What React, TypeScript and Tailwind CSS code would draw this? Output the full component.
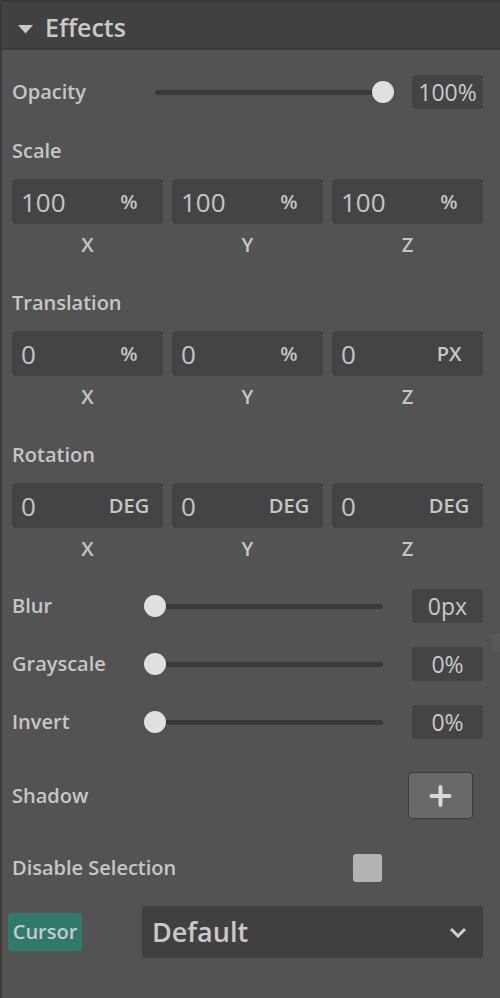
import React from 'react';

const font = { fontFamily: '"Open Sans", "Noto Sans", sans-serif' };

function Slider({ value }: { value: number }) {
  // thumb is centred on the track ends
  return (
    <div className="relative h-[22px] w-[228px]">
      <div className="absolute left-0 right-0 top-[9px] h-[5px] rounded-full bg-[#3a3a3a]" />
      <div
        className="absolute top-0 h-[22px] w-[22px] rounded-full bg-[#e0e0e0]"
        style={{ left: `calc(${value}% - 11px)` }}
      />
    </div>
  );
}

function ValueBox({ text }: { text: string }) {
  return (
    <div className="ml-auto flex h-[34px] w-[71px] items-center justify-center rounded-[3px] bg-[#444444] text-[23px] font-medium leading-none text-[#c9c9c9]">
      {text}
    </div>
  );
}

function SliderRow({ label, value, text, className = '' }: { label: string; value: number; text: string; className?: string }) {
  return (
    <div className={`flex items-center ${className}`}>
      <div className="w-[143px] text-[20px] font-semibold text-[#c6c6c6]">{label}</div>
      <Slider value={value} />
      <ValueBox text={text} />
    </div>
  );
}

function NumField({ value, unit }: { value: string; unit: string }) {
  return (
    <div className="flex h-[45px] items-center rounded-[3px] bg-[#444444] pl-[9px] pr-[4px]">
      <span className="flex-1 text-[26px] leading-none text-[#c4c4c4]">{value}</span>
      <span className="w-[60px] text-center text-[20px] font-semibold leading-none text-[#c6c6c6]">{unit}</span>
    </div>
  );
}

function VectorGroup({ label, values, units, className = '' }: { label: string; values: string[]; units: string[]; className?: string }) {
  return (
    <div className={className}>
      <div className="flex h-[28px] items-center text-[20px] font-semibold text-[#c6c6c6]">{label}</div>
      <div className="mt-[14px] grid grid-cols-3 gap-[9px]">
        {values.map((v, i) => (
          <NumField key={i} value={v} unit={units[i]} />
        ))}
      </div>
      <div className="mt-[7px] grid grid-cols-3 gap-[9px]">
        {['X', 'Y', 'Z'].map((a) => (
          <div key={a} className="flex h-[28px] items-center justify-center text-[20px] font-semibold text-[#c6c6c6]">
            {a}
          </div>
        ))}
      </div>
    </div>
  );
}

export default function App() {
  return (
    <div className="relative h-[998px] w-[500px] overflow-hidden border-l-2 border-t-2 border-[#3a3a3a] bg-[#535353]" style={font}>
      <div className="flex h-[48px] items-center border-b-2 border-[#3b3b3b] bg-[#414141] pl-[16px] pt-[6px]">
        <svg width="15" height="9" viewBox="0 0 15 9" className="mt-[2px]">
          <path d="M0 0 L15 0 L7.5 8.5 Z" fill="#c9c9c9" />
        </svg>
        <span className="ml-[12px] text-[25px] font-semibold text-[#c9c9c9]">Effects</span>
      </div>

      <div className="pl-[10px] pr-[17px]">
        <SliderRow label="Opacity" value={100} text="100%" className="mt-[25px]" />

        <VectorGroup className="mt-[28px]" label="Scale" values={['100', '100', '100']} units={['%', '%', '%']} />
        <VectorGroup className="mt-[30px]" label="Translation" values={['0', '0', '0']} units={['%', '%', 'PX']} />
        <VectorGroup className="mt-[30px]" label="Rotation" values={['0', '0', '0']} units={['DEG', 'DEG', 'DEG']} />

        <SliderRow label="Blur" value={0} text="0px" className="mt-[26px]" />
        <SliderRow label="Grayscale" value={0} text="0%" className="mt-[24px]" />
        <SliderRow label="Invert" value={0} text="0%" className="mt-[24px]" />

        <div className="mt-[33px] flex h-[47px] items-center">
          <div className="text-[20px] font-semibold text-[#c6c6c6]">Shadow</div>
          <button className="ml-auto mr-[10px] flex h-[47px] w-[65px] items-center justify-center rounded-[4px] border border-[#3c3c3c] bg-[#696969]">
            <svg width="23" height="22" viewBox="0 0 23 22">
              <path d="M11.5 2 V20 M2.5 11 H20.5" stroke="#d8d8d8" strokeWidth="4" strokeLinecap="round" />
            </svg>
          </button>
        </div>

        <div className="mt-[35px] flex h-[28px] items-center">
          <div className="w-[341px] text-[20px] font-semibold text-[#c6c6c6]">Disable Selection</div>
          <div className="h-[28px] w-[29px] rounded-[3px] bg-[#b3b3b3]" />
        </div>

        <div className="mt-[24px] flex h-[52px] items-center">
          <div className="-ml-[4px] flex h-[38px] w-[74px] items-center justify-center rounded-[3px] bg-[#2f7b6b] text-[20px] font-semibold text-[#c9c9c9]">
            Cursor
          </div>
          <div className="ml-auto flex h-[52px] w-[341px] items-center rounded-[3px] bg-[#404040] pl-[10px] pr-[16px]">
            <span className="flex-1 text-[27px] font-semibold text-[#c9c9c9]">Default</span>
            <svg width="18" height="11" viewBox="0 0 18 11">
              <path d="M2 2 L9 9 L16 2" fill="none" stroke="#d0d0d0" strokeWidth="3" />
            </svg>
          </div>
        </div>
      </div>

      <div className="absolute right-0 top-[632px] h-[18px] w-[8px] bg-[#585858]" />
    </div>
  );
}
